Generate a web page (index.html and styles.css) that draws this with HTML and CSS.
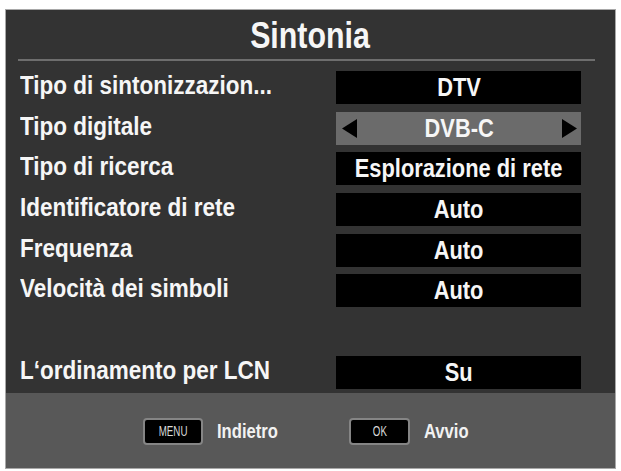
FILE: index.html
```html
<!DOCTYPE html>
<html lang="it">
<head>
<meta charset="utf-8">
<title>Sintonia</title>
<link rel="stylesheet" href="styles.css">
</head>
<body>
<div class="panel">
  <div class="title"><span class="nx">Sintonia</span></div>
  <div class="rule"></div>
  <div class="rows">
    <div class="row"><span class="label"><span class="nx nl">Tipo di sintonizzazion...</span></span><span class="value"><span class="nx">DTV</span></span></div>
    <div class="row"><span class="label"><span class="nx nl">Tipo digitale</span></span>
      <span class="value value-sel">
        <svg class="tri" width="16" height="19" viewBox="0 0 16 19"><path d="M15 0 L15 19 L0 9.5 Z" fill="#000"/></svg>
        <span class="nx">DVB-C</span>
        <svg class="tri" width="16" height="19" viewBox="0 0 16 19"><path d="M1 0 L1 19 L16 9.5 Z" fill="#000"/></svg>
      </span>
    </div>
    <div class="row"><span class="label"><span class="nx nl">Tipo di ricerca</span></span><span class="value"><span class="nx">Esplorazione di rete</span></span></div>
    <div class="row"><span class="label"><span class="nx nl">Identificatore di rete</span></span><span class="value"><span class="nx">Auto</span></span></div>
    <div class="row"><span class="label"><span class="nx nl">Frequenza</span></span><span class="value"><span class="nx">Auto</span></span></div>
    <div class="row"><span class="label"><span class="nx nl">Velocità dei simboli</span></span><span class="value"><span class="nx">Auto</span></span></div>
    <div class="row row-empty"></div>
    <div class="row"><span class="label"><span class="nx nl">L‘ordinamento per LCN</span></span><span class="value"><span class="nx">Su</span></span></div>
  </div>
  <div class="footer">
    <span class="key"><span class="nx">MENU</span></span><span class="hint"><span class="nx nl">Indietro</span></span>
    <span class="key key-ok"><span class="nx">OK</span></span><span class="hint"><span class="nx nl">Avvio</span></span>
  </div>
</div>
</body>
</html>
```
FILE: styles.css
```css
html, body {
  margin: 0;
  padding: 0;
  background: #ffffff;
}
body {
  font-family: "Liberation Sans", Arial, sans-serif;
  font-weight: bold;
  color: #f6f6f6;
}
.nx {
  display: inline-block;
  white-space: nowrap;
  transform: scaleX(0.84);
  transform-origin: center;
}
.nl {
  transform-origin: left center;
}
.panel {
  margin: 9px 0 0 5px;
  width: 611px;
  height: 460px;
  box-sizing: border-box;
  border: 1px solid #a8a8a8;
  background: #333333;
  display: flex;
  flex-direction: column;
}
.title {
  margin-top: 6px;
  height: 40px;
  line-height: 40px;
  font-size: 37px;
  display: flex;
  justify-content: center;
  padding-right: 2px;
}
.title .nx {
  transform: scaleX(0.82);
}
.rule {
  margin: 3px 20px 0 12px;
  height: 2px;
  background: #6e6e6e;
}
.rows {
  margin-top: 10px;
  padding: 0 34px 0 14px;
  display: grid;
  grid-template-columns: 1fr 245px;
  row-gap: 7.7px;
}
.row {
  display: contents;
}
.row-empty::before {
  content: "";
  height: 33px;
  grid-column: 1 / 3;
}
.label {
  height: 33px;
  line-height: 29px;
  font-size: 26px;
  white-space: nowrap;
  min-width: 0;
}
.label .nx {
  transform: scaleX(0.865);
}
.value {
  height: 33px;
  line-height: 32px;
  font-size: 26px;
  background: #000;
  display: flex;
  justify-content: center;
  min-width: 0;
}
.value-sel {
  background: #6b6b6b;
  justify-content: space-between;
  align-items: center;
  padding: 0 4px 0 6px;
}
.value-sel .nx {
  line-height: 32px;
}
.tri {
  display: block;
}
.footer {
  margin-top: auto;
  height: 75px;
  background: #585858;
  display: flex;
  align-items: center;
  padding-left: 137px;
  padding-top: 1px;
  box-sizing: border-box;
}
.key {
  width: 60px;
  height: 27px;
  box-sizing: border-box;
  border: 2px solid #858585;
  border-radius: 4px;
  background: #000;
  color: #d8d8d8;
  font-size: 15px;
  font-weight: normal;
  display: flex;
  align-items: center;
  justify-content: center;
  padding-bottom: 1px;
}
.key .nx {
  transform: scaleX(0.65);
}
.key-ok {
  margin-left: 59px;
  width: 61px;
}
.hint {
  margin-left: 14px;
  font-size: 20px;
  color: #f2f2f2;
}
.hint .nx {
  transform: scaleX(0.83);
}
```
